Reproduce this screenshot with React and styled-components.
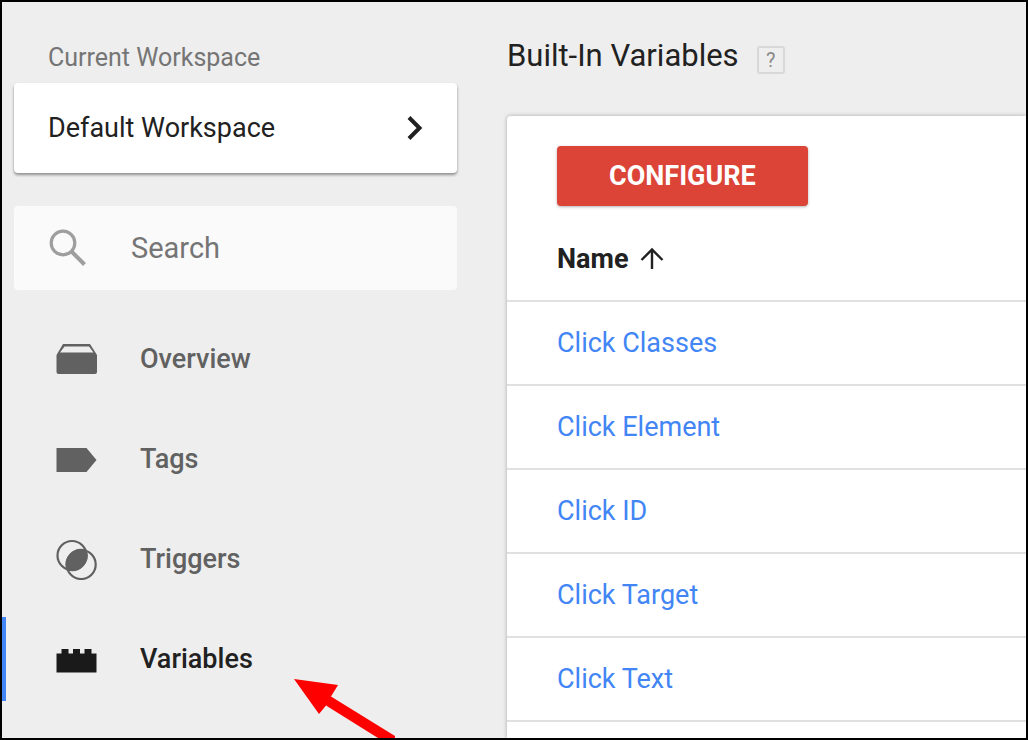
import React, { useState } from 'react';
import styled, { createGlobalStyle } from 'styled-components';

const GlobalStyle = createGlobalStyle`
  * {
    box-sizing: border-box;
  }

  body {
    margin: 0;
    font-family: Roboto, 'Liberation Sans', sans-serif;
    color: #212121;
  }
`;

const Page = styled.div`
  position: relative;
  display: flex;
  gap: 50px;
  min-height: 100vh;
  padding-left: 12px;
  border: 2px solid #000;
  background: #eee;
  overflow: hidden;
`;

const Sidebar = styled.aside`
  flex: 0 0 443px;
  min-width: 0;
  padding-top: 40px;
`;

const WorkspaceLabel = styled.div`
  padding-left: 34px;
  margin-bottom: 9px;
  font-size: 25px;
  line-height: 32px;
  color: #757575;
`;

const WorkspaceButton = styled.button`
  display: flex;
  align-items: center;
  justify-content: space-between;
  width: 100%;
  height: 90px;
  padding: 0 32px 0 34px;
  border: none;
  border-radius: 4px;
  background: #fff;
  box-shadow: 0 2px 3px rgba(0, 0, 0, 0.4);
  font-family: inherit;
  font-size: 27px;
  color: #212121;
  cursor: pointer;
`;

const SearchBox = styled.label`
  display: flex;
  align-items: center;
  gap: 44px;
  height: 84px;
  margin: 33px 0 27px;
  padding-left: 35px;
  border-radius: 4px;
  background: #fafafa;
`;

const SearchInput = styled.input`
  flex: 1;
  min-width: 0;
  padding: 0;
  border: none;
  outline: none;
  background: transparent;
  font-family: inherit;
  font-size: 29px;
  color: #212121;

  &::placeholder {
    color: #757575;
    opacity: 1;
  }
`;

const Nav = styled.nav`
  display: flex;
  flex-direction: column;
  gap: 16px;
  margin-left: -12px;
`;

const NavItem = styled.a`
  display: flex;
  align-items: center;
  gap: 42px;
  height: 84px;
  padding-left: 50px;
  border-left: 4px solid ${props => (props.$active ? '#4285f4' : 'transparent')};
  font-size: 27px;
  font-weight: 500;
  color: ${props => (props.$active ? '#212121' : '#616161')};
  text-decoration: none;
`;

const Main = styled.main`
  flex: 1;
  min-width: 0;
  display: flex;
  flex-direction: column;
  padding-top: 34px;
`;

const Heading = styled.div`
  display: flex;
  align-items: center;
  gap: 18px;
  margin-bottom: 40px;
`;

const Title = styled.h1`
  margin: 0;
  font-size: 31px;
  font-weight: 400;
  line-height: 40px;
`;

const HelpButton = styled.button`
  width: 28px;
  height: 28px;
  margin-top: 8px;
  padding: 0;
  border: 2px solid #d8d8d8;
  border-radius: 3px;
  background: transparent;
  font-family: inherit;
  font-size: 20px;
  line-height: 24px;
  color: #8a8a8a;
`;

const Card = styled.section`
  flex: 1;
  padding-top: 30px;
  border-radius: 4px 0 0 0;
  background: #fff;
  box-shadow: 0 0 4px rgba(0, 0, 0, 0.3);
`;

const ConfigureButton = styled.button`
  display: block;
  height: 60px;
  margin-left: 50px;
  padding: 0 52px;
  border: none;
  border-radius: 4px;
  background: #db4437;
  box-shadow: 0 1px 3px rgba(0, 0, 0, 0.3);
  font-family: inherit;
  font-size: 27px;
  font-weight: 700;
  color: #fff;
  cursor: pointer;
`;

const Table = styled.table`
  width: 100%;
  margin-top: 12px;
  border-collapse: separate;
  border-spacing: 0;
`;

const cell = `
  height: 84px;
  padding: 0 50px;
  border-bottom: 2px solid #e0e0e0;
  font-size: 27px;
  text-align: left;
`;

const HeaderCell = styled.th`
  ${cell}
  font-weight: 700;
`;

const Cell = styled.td`
  ${cell}
`;

const SortLabel = styled.span`
  display: flex;
  align-items: center;
  gap: 12px;
`;

const VariableLink = styled.a`
  color: #4285f4;
  text-decoration: none;
`;

const Pointer = styled.svg`
  position: absolute;
  left: 288px;
  bottom: 0;
  pointer-events: none;
`;

const ChevronIcon = () => (
  <svg width="20" height="26" viewBox="0 0 20 26" fill="none" stroke="#212121" strokeWidth="4">
    <path d="M4 2.5 14.5 13 4 23.5" />
  </svg>
);

const SearchIcon = () => (
  <svg width="38" height="38" viewBox="0 0 38 38" fill="none" stroke="#9e9e9e">
    <circle cx="14" cy="14" r="11.8" strokeWidth="3.2" />
    <path d="M22.5 22.5 35.5 35.5" strokeWidth="4" />
  </svg>
);

const OverviewIcon = () => (
  <svg width="42" height="42" viewBox="0 0 42 42" fill="#616161" fillRule="evenodd">
    <path d="M.5 17 7 6H34L41 17V34Q41 36 39 36H2.5Q.5 36 .5 34ZM4 14.500H37.500L33 8.500H8.500Z" />
  </svg>
);

const TagIcon = () => (
  <svg width="42" height="42" viewBox="0 0 42 42">
    <path d="M.5 10H30.500L40.500 22 30.500 34H.5Z" fill="#616161" />
  </svg>
);

const TriggerIcon = () => (
  <svg width="42" height="42" viewBox="0 0 42 42" fill="none" stroke="#616161" strokeWidth="2.2">
    <circle cx="16" cy="17.500" r="14.5" />
    <circle cx="25.2" cy="26.500" r="14.5" />
    <path d="M29.700 12.700A14.500 14.500 0 0 1 11.500 31.300 14.500 14.500 0 0 1 29.700 12.700Z" fill="#616161" />
  </svg>
);

const VariableIcon = () => (
  <svg width="42" height="42" viewBox="0 0 42 42">
    <path d="M.5 15.500H5.500V11H12.500V15.500H17V11H24V15.500H28.500V11H35.500V15.500H40.500V34.500H.5Z" fill="#1a1a1a" />
  </svg>
);

const ArrowUpIcon = () => (
  <svg width="24" height="24" viewBox="0 0 24 24" fill="none" stroke="#212121" strokeWidth="2.4">
    <path d="M12 22V3M1.5 13 12 2.5 22.5 13" />
  </svg>
);

const navItems = [
  { label: 'Overview', icon: OverviewIcon },
  { label: 'Tags', icon: TagIcon },
  { label: 'Triggers', icon: TriggerIcon },
  { label: 'Variables', icon: VariableIcon },
];

const variables = ['Click Classes', 'Click Element', 'Click ID', 'Click Target', 'Click Text'];

const App = () => {
  const [active, setActive] = useState('Variables');
  const [search, setSearch] = useState('');

  return (
    <Page>
      <GlobalStyle />
      <Sidebar>
        <WorkspaceLabel id="workspace-label">Current Workspace</WorkspaceLabel>
        <WorkspaceButton type="button" aria-describedby="workspace-label">
          Default Workspace
          <ChevronIcon />
        </WorkspaceButton>

        <SearchBox>
          <SearchIcon />
          <SearchInput
            type="text"
            aria-label="Search"
            placeholder="Search"
            value={search}
            onChange={(e) => setSearch(e.target.value)}
          />
        </SearchBox>

        <Nav>
          {navItems.map(({ label, icon: Icon }) => (
            <NavItem
              key={label}
              href={`#${label.toLowerCase()}`}
              $active={active === label}
              onClick={() => setActive(label)}
            >
              <Icon />
              {label}
            </NavItem>
          ))}
        </Nav>
      </Sidebar>

      <Main>
        <Heading>
          <Title>Built-In Variables</Title>
          <HelpButton type="button">?</HelpButton>
        </Heading>

        <Card>
          <ConfigureButton type="button">CONFIGURE</ConfigureButton>
          <Table>
            <thead>
              <tr>
                <HeaderCell>
                  <SortLabel>
                    Name
                    <ArrowUpIcon />
                  </SortLabel>
                </HeaderCell>
              </tr>
            </thead>
            <tbody>
              {variables.map(name => (
                <tr key={name}>
                  <Cell>
                    <VariableLink href="#variable">{name}</VariableLink>
                  </Cell>
                </tr>
              ))}
            </tbody>
          </Table>
        </Card>
      </Main>

      <Pointer width="106" height="62" viewBox="0 0 106 62" fill="#f00">
        <path d="M4 3 48 9 41 20.5 105 60V62H88L36 29.5 29 38Z" />
      </Pointer>
    </Page>
  );
};

export default App;
